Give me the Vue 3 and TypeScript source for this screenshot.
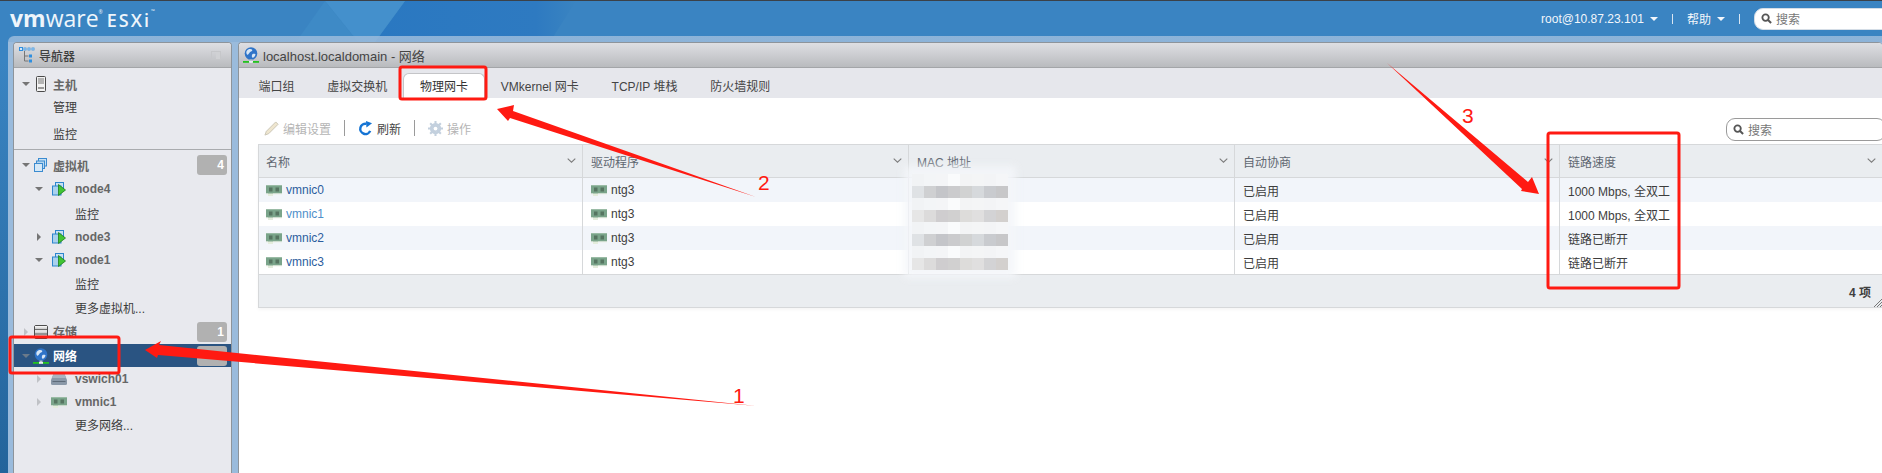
<template>
  <div class="page">
    <svg class="sprite" aria-hidden="true">
      <symbol id="nic" viewBox="0 0 16 11">
        <path d="M0 0h16v8.500H7v2H2v-2H0z" fill="#7aa48a" />
        <path d="M0 8.500h16v.8H7v1.700H2v-1.700H0z" fill="#e4ecdc" />
        <rect x="3" y="2.500" width="3.500" height="4" fill="#567561" />
        <rect x="9.500" y="2.500" width="3.500" height="4" fill="#567561" />
        <rect x="0" y="0" width="16" height="1" fill="#9abba5" />
      </symbol>
      <symbol id="globe" viewBox="0 0 16 16">
        <circle cx="8" cy="6.500" r="6.300" fill="#2f74c8" />
        <path d="M4 3.500c2-2 4-1.500 5-1 1 1.200-.5 2-2 2.500-1 1.500-2 3.500-3 2.500-.8-1-1-3 0-4zM9.500 7c1.500-.6 3-.3 3 .5-.4 1.800-1.500 3-3 3.300-1-.6-.8-2.800 0-3.800z" fill="#d7e6f5" />
        <rect x="6.500" y="12.500" width="3" height="1.500" fill="#b9c4cc" />
        <rect x="0" y="14" width="7" height="1.800" fill="#23c21f" />
        <rect x="9" y="14" width="7" height="1.800" fill="#23c21f" />
        <rect x="6" y="14" width="4" height="1.800" fill="#e8eef2" />
      </symbol>
      <symbol id="host" viewBox="0 0 10 16">
        <rect x="0.500" y="0.500" width="9" height="15" rx="1" fill="#f2f2f2" stroke="#4a4a4a" />
        <path d="M2 3h6M2 5h6M2 7h6" stroke="#777" />
        <rect x="2" y="11" width="6" height="2" fill="#999" />
      </symbol>
      <symbol id="vms" viewBox="0 0 14 14">
        <rect x="4.500" y="0.500" width="8" height="7.500" fill="#c7e0f4" stroke="#3a8bd0" />
        <rect x="2.500" y="3" width="8" height="7.500" fill="#b7d6ef" stroke="#3a8bd0" />
        <rect x="0.500" y="5.500" width="8" height="8" fill="#d5e8f7" stroke="#3a8bd0" />
      </symbol>
      <symbol id="vm" viewBox="0 0 14 14">
        <rect x="3.500" y="0.500" width="8" height="7.500" fill="#c7e0f4" stroke="#2d86ce" />
        <rect x="0.500" y="4" width="8.500" height="9" fill="#a9d1ee" stroke="#2d86ce" />
        <path d="M6.500 2.500 13.500 8 6.500 13.500z" fill="#41c535" stroke="#1b7d1b" stroke-width="0.800" />
      </symbol>
      <symbol id="storage" viewBox="0 0 14 14">
        <rect x="0.500" y="0.500" width="13" height="13" rx="1.500" fill="#d3d3d3" stroke="#4d4d4d" />
        <path d="M1 4.700h12M1 9h12" stroke="#555" />
        <rect x="1" y="1" width="12" height="1.500" fill="#f4f4f4" />
        <rect x="1" y="5.300" width="12" height="1.200" fill="#f4f4f4" />
      </symbol>
      <symbol id="vswitch" viewBox="0 0 16 11">
        <path d="M2.500 0h11L16 6v3.500a1.500 1.500 0 0 1-1.500 1.500h-13A1.500 1.500 0 0 1 0 9.500V6z" fill="#8a98a8" />
        <path d="M2.500 0h11L15 4H1z" fill="#a9b4c0" />
        <rect x="1.500" y="7" width="13" height="1" fill="#5e6b79" />
      </symbol>
      <symbol id="tree" viewBox="0 0 16 16">
        <path d="M5.500 4v10h4M5.500 9h4" stroke="#777" fill="none" />
        <rect x="0.500" y="0.500" width="3" height="3" fill="#cfe6fa" stroke="#2f8fe0" />
        <rect x="5" y="1" width="2" height="2" fill="#fff" stroke="#2f8fe0" stroke-width="0.800" />
        <rect x="9" y="1" width="2" height="2" fill="#fff" stroke="#2f8fe0" stroke-width="0.800" />
        <rect x="13" y="1" width="2" height="2" fill="#fff" stroke="#2f8fe0" stroke-width="0.800" />
        <rect x="10" y="7.500" width="3" height="3" fill="#2f8fe0" />
        <rect x="10" y="12.500" width="3" height="3" fill="#2f8fe0" />
      </symbol>
      <symbol id="search" viewBox="0 0 12 12">
        <circle cx="5" cy="5" r="3.500" fill="none" stroke="#555" stroke-width="2" />
        <path d="M7.700 7.700 11 11" stroke="#555" stroke-width="2.200" />
      </symbol>
      <symbol id="chevron" viewBox="0 0 9 5">
        <path d="M.7.700 4.500 4.200 8.300.7" fill="none" stroke="#7c7c7c" stroke-width="1.100" />
      </symbol>
    </svg>

    <!-- faceted shapes behind the top bar and the gutter under it -->
    <svg class="facets" viewBox="0 0 1882 42">
      <defs>
        <linearGradient id="facet-fade" x1="0" x2="1" y1="0" y2="0">
          <stop offset="0" stop-color="#2a78c1" />
          <stop offset="0.8" stop-color="#2e7ac1" />
          <stop offset="1" stop-color="#3a84c1" />
        </linearGradient>
      </defs>
      <polygon points="405,1 576,1 550,42 375,42" fill="url(#facet-fade)" />
      <polygon points="325,1 405,1 375,42 358,42" fill="#4490cc" />
      <polygon points="325,1 358,42 296,42" fill="#3e8ac6" />
    </svg>

    <header class="topbar">
      <div class="logo">
        <span class="logo-vm">vm</span><span class="logo-ware">ware</span><sup class="logo-reg">®</sup>
        <span class="logo-esxi">ESXi</span><sup class="logo-tm">™</sup>
      </div>
      <div class="topbar-right">
        <span class="top-link">root@10.87.23.101<i class="top-caret"></i></span>
        <span class="top-sep"></span>
        <span class="top-link">帮助<i class="top-caret"></i></span>
        <span class="top-sep"></span>
        <div class="search top-search">
          <svg class="search-icon"><use href="#search" /></svg>
          <span>搜索</span>
        </div>
      </div>
    </header>

    <main class="workspace">
      <aside class="panel nav">
        <div class="panel-head">
          <svg class="nav-head-icon"><use href="#tree" /></svg>
          <span class="nav-title">导航器</span>
          <span class="collapse"></span>
        </div>
        <div class="nav-body">
          <section v-for="(group, g) in navGroups" :key="g" class="nav-group">
            <div
              v-for="row in group"
              :key="row.id"
              class="nav-row"
              :class="[`lv${row.level}`, { selected: row.selected, head: row.head, leaf: !row.icon }]"
              :style="{ height: row.h + 'px' }"
            >
              <template v-if="row.icon">
                <i class="caret" :class="row.caret"></i>
                <svg class="row-icon" :class="`ic-${row.icon}`"><use :href="`#${row.icon}`" /></svg>
              </template>
              <span class="row-label">{{ row.label }}</span>
              <span v-if="row.badge !== undefined" class="badge">{{ row.badge }}</span>
            </div>
          </section>
        </div>
      </aside>

      <section class="panel content">
        <div class="panel-head">
          <svg class="title-icon"><use href="#globe" /></svg>
          <span class="title">localhost.localdomain - 网络</span>
        </div>
        <nav class="tabs">
          <span v-for="tab in tabs" :key="tab" class="tab" :class="{ active: tab === '物理网卡' }">{{ tab }}</span>
        </nav>
        <div class="toolbar">
          <span class="tool disabled">
            <svg class="tool-icon" viewBox="0 0 16 16">
              <path d="M12.500 1 15 3.500 5 13.500 1 15l1.500-4z" fill="#efe6cf" stroke="#c9c4b4" />
            </svg>
            编辑设置
          </span>
          <span class="tool-sep"></span>
          <span class="tool">
            <svg class="tool-icon" viewBox="0 0 16 16">
              <path d="M13 10.500A5.500 5.500 0 1 1 9 3" fill="none" stroke="#1574d4" stroke-width="2.600" />
              <path d="M8.500 0 15 2.500 9 7z" fill="#1574d4" />
            </svg>
            刷新
          </span>
          <span class="tool-sep"></span>
          <span class="tool disabled">
            <svg class="tool-icon" viewBox="0 0 16 16">
              <circle cx="8" cy="8" r="4.500" fill="none" stroke="#c3d0de" stroke-width="3" />
              <path d="M8 0v16M0 8h16M2.300 2.300l11.400 11.400M13.700 2.300 2.300 13.700" stroke="#c3d0de" stroke-width="2.200" />
              <circle cx="8" cy="8" r="2" fill="#fff" />
            </svg>
            操作
          </span>
          <div class="search tool-search">
            <svg class="search-icon"><use href="#search" /></svg>
            <span>搜索</span>
          </div>
        </div>

        <div class="grid">
          <div class="grid-row grid-header">
            <div v-for="col in columns" :key="col" class="cell">
              {{ col }}
              <svg class="chevron"><use href="#chevron" /></svg>
            </div>
          </div>
          <div v-for="(nic, i) in nics" :key="nic.name" class="grid-row" :class="{ odd: i % 2 === 0 }">
            <div class="cell">
              <svg class="nic"><use href="#nic" /></svg>
              <a class="nic-link" :class="{ hover: nic.name === 'vmnic1' }">{{ nic.name }}</a>
            </div>
            <div class="cell">
              <svg class="nic"><use href="#nic" /></svg>
              ntg3
            </div>
            <div class="cell"></div>
            <div class="cell">已启用</div>
            <div class="cell">{{ nic.speed }}</div>
          </div>
          <div class="grid-footer">
            <span>4 项</span>
            <svg class="grip" viewBox="0 0 8 8">
              <path d="M8 0 0 8M8 3 3 8M8 6 6 8" stroke="#777" />
            </svg>
          </div>
        </div>
      </section>
    </main>

    <!-- blurred MAC addresses, painted over the table -->
    <div class="mosaic">
      <i v-for="(c, i) in mosaicCells" :key="i" :style="{ background: c }"></i>
    </div>

    <!-- hand drawn annotations on top of the screenshot -->
    <svg class="marks" viewBox="0 0 1882 473">
      <g fill="none" stroke="#ff1a12" stroke-width="3">
        <rect x="10" y="337" width="109" height="36" rx="2" />
        <rect x="400" y="67" width="86" height="32" rx="2" />
        <rect x="1548" y="133" width="131" height="155" rx="2" />
      </g>
      <g fill="#ff1a12">
        <polygon points="145,350 161,341 159,345 757,406 158,355 157,358" />
        <polygon points="497,109 514,105 513,111 756,197 510,118 508,121" />
        <polygon points="1539,194 1532,177 1528,182 1387,63 1522,189 1521,191" />
      </g>
      <g class="mark-num" fill="#ff1a12">
        <text x="733" y="403">1</text>
        <text x="758" y="190">2</text>
        <text x="1462" y="123">3</text>
      </g>
    </svg>
  </div>
</template>

<script setup lang="ts">
interface NavRow {
  id: string;
  label: string;
  level: number;
  h: number;
  icon?: string;
  caret?: string;
  badge?: string;
  head?: boolean;
  selected?: boolean;
}

const navGroups: NavRow[][] = [
  [
    { id: "host", label: "主机", level: 0, h: 22, icon: "host", caret: "down", head: true },
    { id: "manage", label: "管理", level: 0, h: 22 },
    { id: "monitor", label: "监控", level: 0, h: 32 },
  ],
  [
    { id: "vms", label: "虚拟机", level: 0, h: 24, icon: "vms", caret: "down", head: true, badge: "4" },
    { id: "node4", label: "node4", level: 1, h: 24, icon: "vm", caret: "down", head: true },
    { id: "node4m", label: "监控", level: 1, h: 24 },
    { id: "node3", label: "node3", level: 1, h: 23, icon: "vm", caret: "right", head: true },
    { id: "node1", label: "node1", level: 1, h: 23, icon: "vm", caret: "down", head: true },
    { id: "node1m", label: "监控", level: 1, h: 24 },
    { id: "morevm", label: "更多虚拟机...", level: 1, h: 24 },
    { id: "storage", label: "存储", level: 0, h: 25, icon: "storage", caret: "right faint", head: true, badge: "1" },
    { id: "net", label: "网络", level: 0, h: 23, icon: "globe", caret: "down", head: true, badge: "", selected: true },
    { id: "vswitch", label: "vswich01", level: 1, h: 24, icon: "vswitch", caret: "right faint", head: true },
    { id: "vmnic1", label: "vmnic1", level: 1, h: 22, icon: "nic", caret: "right faint", head: true },
    { id: "morenet", label: "更多网络...", level: 1, h: 22 },
  ],
];

const tabs = ["端口组", "虚拟交换机", "物理网卡", "VMkernel 网卡", "TCP/IP 堆栈", "防火墙规则"];
const columns = ["名称", "驱动程序", "MAC 地址", "自动协商", "链路速度"];
const nics = [
  { name: "vmnic0", speed: "1000 Mbps, 全双工" },
  { name: "vmnic1", speed: "1000 Mbps, 全双工" },
  { name: "vmnic2", speed: "链路已断开" },
  { name: "vmnic3", speed: "链路已断开" },
];

const dark = ["#dfe2e5", "#cfd0d2", "#c4c5c9", "#cbcbcd", "#d1d2d2", "#d6d9dc", "#c9cbcf", "#c7c7c9"];
const mid = ["#e6e6e6", "#dcdbdb", "#cfcdcf", "#d1d0d0", "#dddcda", "#e0dfdf", "#d3d3d5", "#d3d0ce"];
const light = ["#f1f3f5", "#f3f5f7", "#f4f5f7", "#fafbfc", "#f3f4f5", "#f4f5f6", "#f3f4f6", "#f5f6f8"];
const mosaicCells = [light, dark, light, mid, light, dark, light, mid].flat();
</script>

<style>
html,
body {
  margin: 0;
  background: #fff;
}
</style>

<style scoped>
.page {
  position: relative;
  width: 1882px;
  height: 473px;
  overflow: hidden;
  display: flex;
  flex-direction: column;
  font-family: "Liberation Sans", "Noto Sans CJK SC", sans-serif;
  font-size: 12px;
  color: #444;
  background: linear-gradient(180deg, #3a84c2 0, #3a84c2 60px, #23649b 473px);
  border-top: 1px solid #3b4148;
  box-sizing: border-box;
}
.sprite {
  position: absolute;
  width: 0;
  height: 0;
}
.facets {
  position: absolute;
  left: 0;
  top: -1px;
  width: 1882px;
  height: 42px;
}
.topbar {
  position: relative;
  flex: none;
  height: 35px;
  display: flex;
  align-items: center;
  justify-content: space-between;
}
.logo {
  display: flex;
  align-items: baseline;
  margin-left: 10px;
  color: #eef5fb;
  font-family: "Open Sans", "Liberation Sans", sans-serif;
  line-height: 1;
}
.logo-vm {
  font-size: 23px;
  font-weight: 700;
}
.logo-ware {
  font-size: 23px;
}
.logo-reg {
  font-size: 5px;
  align-self: flex-start;
  margin-top: 3px;
}
.logo-esxi {
  font-size: 18px;
  font-weight: 600;
  margin-left: 4px;
  letter-spacing: 2px;
}
.logo-tm {
  font-size: 5px;
  align-self: flex-start;
  margin-top: 2px;
}
.topbar-right {
  display: flex;
  align-items: center;
  height: 100%;
}
.top-link {
  display: flex;
  align-items: center;
  color: #f2f6fb;
  font-weight: 400;
}
.top-caret {
  width: 0;
  height: 0;
  margin-left: 6px;
  border: 4px solid transparent;
  border-top: 4px solid #f2f6fb;
  border-bottom: 0;
}
.top-sep {
  width: 1px;
  height: 10px;
  margin: 0 14px;
  background: #d9e6f2;
}
.search {
  display: flex;
  align-items: center;
  gap: 4px;
  box-sizing: border-box;
  background: #fff;
  border: 1px solid #b9b9b9;
  border-radius: 9px;
  color: #777;
  padding-left: 6px;
}
.search-icon {
  width: 11px;
  height: 11px;
}
.top-search {
  width: 140px;
  height: 22px;
  margin-right: -12px;
  border-color: #d4dde6;
}
.workspace {
  position: relative;
  flex: 1;
  min-height: 0;
  display: flex;
  gap: 6px;
  margin-left: 8px;
  padding: 6px 0 0 5px;
  background:
    linear-gradient(180deg, rgba(154, 187, 220, 0.86) 0 6px, #9abbdc 6px);
  border-top-left-radius: 6px;
}
.panel {
  display: flex;
  flex-direction: column;
  background: #fff;
  border: 1px solid #8d949b;
  border-bottom: 0;
  border-radius: 4px 4px 0 0;
  overflow: hidden;
}
.panel-head {
  flex: none;
  height: 25px;
  box-sizing: border-box;
  display: flex;
  align-items: center;
  background: linear-gradient(180deg, #dedfe3, #b9bbbe);
  border-bottom: 1px solid #a3a5a8;
}
.nav {
  flex: none;
  width: 217px;
  background: #e8e9ee;
}
.nav-head-icon {
  width: 16px;
  height: 16px;
  margin-left: 5px;
}
.nav-title {
  margin-left: 4px;
  color: #3f3f3f;
  font-weight: 500;
}
.collapse {
  width: 8px;
  height: 7px;
  margin: 0 10px 0 auto;
  background: linear-gradient(90deg, transparent 0 50%, #d0d1d4 50%);
  border: 1px solid #c6c7ca;
}
.nav-body {
  padding-top: 5px;
}
.nav-group:first-child {
  border-bottom: 1px solid #a9abae;
  margin-bottom: 3px;
}
.nav-row {
  display: flex;
  align-items: center;
  position: relative;
  box-sizing: border-box;
  color: #3c3c3c;
}
.nav-row.head {
  color: #666;
  font-weight: 700;
}
.nav-row.lv0 {
  padding-left: 8px;
}
.nav-row.lv1 {
  padding-left: 21px;
}
.nav-row.leaf.lv0 {
  padding-left: 39px;
}
.nav-row.leaf.lv1 {
  padding-left: 61px;
}
.nav-row.selected {
  background: #2a5482;
  color: #fff;
}
.caret {
  flex: none;
  width: 8px;
  height: 8px;
  display: flex;
  align-items: center;
  justify-content: center;
}
.caret::before {
  content: "";
  border-style: solid;
  border-color: transparent;
}
.caret.down::before {
  border-width: 4px 4px 0;
  border-top-color: #757575;
}
.caret.right::before {
  border-width: 4px 0 4px 4px;
  border-left-color: #757575;
}
.caret.faint::before {
  border-left-color: #c0c2c6;
}
.selected .caret.down::before {
  border-top-color: #6b7a8a;
}
.row-icon {
  flex: none;
  width: 14px;
  height: 14px;
}
.lv0 .row-icon {
  margin: 0 5px 0 4px;
}
.lv0 .ic-host {
  width: 10px;
  height: 16px;
  margin: 0 7px 0 6px;
}
.lv0 .ic-globe {
  width: 16px;
  height: 16px;
  margin: 0 4px 0 3px;
}
.lv1 .row-icon {
  margin: 0 9px 0 9px;
}
.lv1 .ic-nic,
.lv1 .ic-vswitch {
  width: 16px;
  height: 11px;
  margin: 0 8px 0 8px;
}
.badge {
  position: absolute;
  right: 4px;
  top: 50%;
  transform: translateY(-50%);
  width: 30px;
  height: 20px;
  box-sizing: border-box;
  padding-right: 3px;
  line-height: 20px;
  text-align: right;
  background: #b1b1b1;
  border-radius: 3px;
  color: #fff;
  font-weight: 700;
}
.content {
  flex: 1;
  min-width: 0;
  border-right: 0;
}
.title-icon {
  width: 16px;
  height: 16px;
  margin-left: 4px;
}
.title {
  margin-left: 4px;
  font-size: 13px;
  color: #444;
}
.tabs {
  flex: none;
  height: 30px;
  display: flex;
  align-items: flex-end;
  padding-left: 3px;
  background: #e6e7ec;
}
.tab {
  height: 25px;
  line-height: 28px;
  padding: 0 16.400px;
  color: #444;
  box-sizing: border-box;
}
.tab.active {
  background: #fff;
  margin: 0 -1px;
  border: 1px solid #c4c5c8;
  border-bottom: 0;
  border-radius: 6px 6px 0 0;
  color: #333;
  line-height: 26px;
}
.toolbar {
  flex: none;
  height: 46px;
  display: flex;
  align-items: center;
  padding: 14px 0 0 25px;
  box-sizing: border-box;
  color: #444;
}
.tool {
  display: flex;
  align-items: center;
  gap: 4px;
}
.tool.disabled {
  color: #b5b5b5;
}
.tool-icon {
  width: 15px;
  height: 15px;
}
.tool-sep {
  width: 1px;
  height: 16px;
  margin: 0 13px;
  background: #9a9a9a;
}
.tool-search {
  width: 160px;
  height: 23px;
  margin: 0 -4px 0 auto;
  position: relative;
  top: 1px;
  border-color: #9a9a9a;
}
.grid {
  flex: none;
  margin-left: 19px;
  border-top: 1px solid #d6d8da;
  border-bottom: 1px solid #d6d8da;
  border-left: 1px solid #d6d8da;
  box-shadow: 0 2px 3px rgba(0, 0, 0, 0.04);
}
.grid-row {
  display: grid;
  grid-template-columns: 324px 326px 326px 325px 1fr;
  height: 24px;
}
.grid-row.odd {
  background: #f2f5fa;
}
.grid-header {
  height: 32px;
  background: #eaedf0;
  border-bottom: 1px solid #d6d8da;
}
.cell {
  position: relative;
  display: flex;
  align-items: center;
  padding-left: 8px;
  border-right: 1px solid #d6d8da;
  color: #3d3d3d;
}
.cell:first-child {
  padding-left: 7px;
}
.grid-header .cell {
  color: #5f6770;
}
.cell:last-child {
  border-right: 0;
}
.chevron {
  position: absolute;
  right: 6px;
  top: 13px;
  width: 9px;
  height: 5px;
}
.nic {
  width: 16px;
  height: 11px;
  margin-right: 4px;
}
.nic-link {
  color: #2c5d9e;
}
.nic-link.hover {
  color: #4f8fca;
}
.grid-footer {
  position: relative;
  height: 33px;
  display: flex;
  align-items: center;
  justify-content: flex-end;
  padding-right: 11px;
  background: #eaedf0;
  border-top: 1px solid #d6d8da;
  font-weight: 700;
  color: #3f3f3f;
  box-sizing: border-box;
}
.grip {
  position: absolute;
  right: 0;
  bottom: 0;
  width: 8px;
  height: 8px;
}
.mosaic {
  position: absolute;
  left: 912px;
  top: 173px;
  display: grid;
  grid-template-columns: repeat(8, 12px);
  grid-auto-rows: 12px;
  box-shadow: 0 0 8px 8px rgba(244, 246, 249, 0.9);
}
.marks {
  position: absolute;
  left: 0;
  top: -1px;
  width: 1882px;
  height: 473px;
  pointer-events: none;
}
.mark-num {
  font-size: 21px;
  font-family: "Liberation Sans", sans-serif;
}
</style>
